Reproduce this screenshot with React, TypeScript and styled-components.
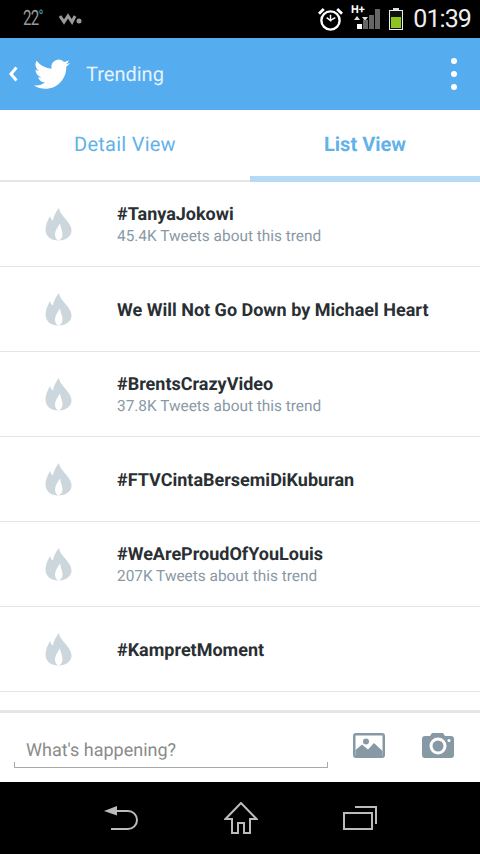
import * as React from "react";
import styled, { createGlobalStyle } from "styled-components";

const GlobalStyle = createGlobalStyle`
  html, body {
    margin: 0;
    padding: 0;
    background: #fff;
  }
  body {
    font-family: Roboto, "Liberation Sans", sans-serif;
    text-rendering: geometricPrecision;
  }
`;

const Screen = styled.div`
  width: 480px;
  height: 854px;
  display: flex;
  flex-direction: column;
  overflow: hidden;
  background: #fff;
`;

const StatusBar = styled.div`
  height: 38px;
  background: #000;
  display: flex;
  align-items: center;
  justify-content: space-between;
  padding: 0 9px 0 23px;
  color: #ddd;
`;

const StatusGroup = styled.div`
  display: flex;
  align-items: center;
`;

const Temp = styled.span`
  font-size: 21px;
  color: #999;
  transform: scaleX(0.72);
  transform-origin: left center;
  width: 22px;
  letter-spacing: -1px;
  white-space: nowrap;
  & sup {
    color: #2a9fc0;
    font-size: 19px;
    line-height: 0;
    vertical-align: 2px;
    letter-spacing: 0;
  }
`;

const WalkmanIcon = styled.svg`
  margin-left: 13px;
`;

const SignalIcon = styled.svg`
  margin-left: 8px;
`;

const BatteryIcon = styled.svg`
  margin-left: 8px;
`;

const Clock = styled.span`
  font-size: 25px;
  color: #eee;
  margin-left: 10px;
  letter-spacing: -0.9px;
`;

const AppBar = styled.div`
  height: 72px;
  background: #55acee;
  display: flex;
  align-items: center;
  padding: 0 23px 0 8px;
  color: #fff;
`;

const BirdIcon = styled.svg`
  margin-left: 15px;
`;

const AppTitle = styled.span`
  font-size: 20px;
  color: #e6f3fd;
  margin-left: 16px;
  flex: 1;
`;

const Kebab = styled.div`
  display: flex;
  flex-direction: column;
  gap: 7px;
`;

const KebabDot = styled.span`
  width: 6px;
  height: 6px;
  border-radius: 50%;
  background: #fff;
`;

const Tabs = styled.div`
  height: 72px;
  box-sizing: border-box;
  display: flex;
  border-bottom: 2px solid #e3e5e6;
`;

const Tab = styled.div<{ $active?: boolean }>`
  width: ${(p) => (p.$active ? "230px" : "250px")};
  position: relative;
  display: flex;
  align-items: center;
  justify-content: center;
  padding-bottom: 2px;
  box-sizing: border-box;
  font-size: 20px;
  color: #62b2ea;
  font-weight: ${(p) => (p.$active ? 700 : 400)};
  letter-spacing: ${(p) => (p.$active ? "0" : "0.25px")};
  &::after {
    content: "";
    display: ${(p) => (p.$active ? "block" : "none")};
    position: absolute;
    left: 0;
    right: 0;
    bottom: -2px;
    height: 6px;
    background: #b5daf5;
  }
`;

const TrendList = styled.div`
  flex: 1;
  min-height: 0;
`;

const TrendRow = styled.div`
  height: 85px;
  box-sizing: border-box;
  display: flex;
  align-items: center;
  border-bottom: 1px solid #e3e5e6;
`;

const FlameCell = styled.div`
  width: 117px;
  padding-left: 45px;
  box-sizing: border-box;
  display: flex;
`;

const TrendText = styled.div`
  display: flex;
  flex-direction: column;
  gap: 2px;
  padding-top: 1px;
`;

const TrendName = styled.div`
  font-size: 18px;
  font-weight: 700;
  color: #292f33;
  line-height: 21px;
  &:only-child {
    padding-top: 2px;
  }
`;

const TrendCount = styled.div`
  font-size: 15.4px;
  color: #8899a6;
  line-height: 18px;
`;

const Composer = styled.div`
  height: 72px;
  box-sizing: border-box;
  border-top: 3px solid #e3e5e6;
  display: flex;
  padding: 0 26px 0 14px;
`;

const InputLine = styled.div`
  width: 314px;
  height: 55px;
  box-sizing: border-box;
  border-bottom: 1px solid #aaa;
  border-left: 1px solid #aaa;
  border-right: 1px solid #aaa;
  position: relative;
  display: flex;
  align-items: flex-end;
  padding: 0 0 3px 11px;
  font-size: 18px;
  color: #8a8a8a;
  line-height: 26px;
  &::before {
    content: "";
    position: absolute;
    left: -1px;
    right: -1px;
    top: 0;
    bottom: 5px;
    background: #fff;
  }
  & span {
    position: relative;
  }
`;

const ComposerIcons = styled.div`
  flex: 1;
  display: flex;
  justify-content: space-between;
  align-items: flex-start;
  padding: 20px 0 0 25px;
`;

const NavBar = styled.div`
  height: 72px;
  background: #000;
  display: flex;
  align-items: center;
  justify-content: space-between;
  padding: 0 103px 0 104px;
`;

const Bird = () => (
  <BirdIcon width="36" height="31" viewBox="0 0 24 20" fill="#fff">
    <path d="M24 2.4a9.8 9.8 0 0 1-2.8.8A5 5 0 0 0 23.3.5a9.800 9.800 0 0 1-3.100 1.200A4.900 4.900 0 0 0 11.800 6.200 13.900 13.900 0 0 1 1.700.9a4.900 4.900 0 0 0 1.500 6.600 4.900 4.900 0 0 1-2.200-.6c0 2.400 1.700 4.400 3.900 4.900a4.900 4.900 0 0 1-2.200.1 4.900 4.900 0 0 0 4.600 3.400A9.900 9.900 0 0 1 0 17.300 13.900 13.900 0 0 0 7.500 19.500c9.100 0 14.300-7.700 14-14.600A10 10 0 0 0 24 2.400z" />
  </BirdIcon>
);

const Flame = () => (
  <svg width="27" height="33" viewBox="0 0 27 33">
    <path
      fill="#ccd6dd"
      fillRule="evenodd"
      d="M14 0c.5 4.500 3.500 7 7 11.500 3 3.800 5.500 7 5.500 11 0 5.500-5 10-13 10S.5 28 .5 21.500c0-4.500 2-9 4.500-13.500.5 2 1.500 3.500 3 4.500C8.500 8 11 3.500 14 0zM15 15.500c-2.500 4-5 7-5 11 0 3 1.500 5.500 3.500 6 2-.5 4-3 4-6 0-4-2-7-2.500-11z"
    />
  </svg>
);

const PhotoIcon = () => (
  <svg width="32" height="25" viewBox="0 0 32 25">
    <rect width="32" height="25" rx="3" fill="#8899a6" />
    <rect x="2.500" y="2.500" width="27" height="20" fill="#fff" />
    <circle cx="13" cy="8.500" r="3" fill="#8899a6" />
    <path fill="#8899a6" d="M2.500 17 9 11.500l6 5 6-6.500 8.500 8v5h-27z" />
  </svg>
);

const CameraIcon = () => (
  <svg width="32" height="25" viewBox="0 0 32 25">
    <path fill="#8899a6" d="M3 3h5l2-3h11l2 3h6a3 3 0 0 1 3 3v16a3 3 0 0 1-3 3H3a3 3 0 0 1-3-3V6a3 3 0 0 1 3-3z" />
    <circle cx="16" cy="13" r="8.500" fill="#fff" />
    <circle cx="16" cy="13" r="5.500" fill="#8899a6" />
    <circle cx="27" cy="7.500" r="1.500" fill="#fff" />
  </svg>
);

const BackIcon = () => (
  <svg width="34" height="26" viewBox="0 0 34 26" fill="none">
    <path d="M0 6l13-5v9.500z" fill="#bbb" />
    <path d="M12 6h12a9 9 0 0 1 0 18H7" stroke="#bbb" strokeWidth="2" />
  </svg>
);

const HomeIcon = () => (
  <svg width="34" height="32" viewBox="0 0 34 32" fill="none">
    <path d="M17 1 1.500 17H8v14h6V21h6v10h6V17h6.500z" stroke="#bbb" strokeWidth="2" />
  </svg>
);

const RecentsIcon = () => (
  <svg width="34" height="24" viewBox="0 0 34 24" fill="none">
    <rect x="1" y="7" width="28" height="16" stroke="#bbb" strokeWidth="2" />
    <path d="M12 1h21v17" stroke="#bbb" strokeWidth="2" />
  </svg>
);

const trends = [
  { name: "#TanyaJokowi", count: "45.4K Tweets about this trend" },
  { name: "We Will Not Go Down by Michael Heart" },
  { name: "#BrentsCrazyVideo", count: "37.8K Tweets about this trend" },
  { name: "#FTVCintaBersemiDiKuburan" },
  { name: "#WeAreProudOfYouLouis", count: "207K Tweets about this trend" },
  { name: "#KampretMoment" },
];

const App = () => (
  <Screen>
    <GlobalStyle />
    <StatusBar>
      <StatusGroup>
        <Temp>
          22<sup>°</sup>
        </Temp>
        <WalkmanIcon width="24" height="12" viewBox="0 0 24 12" fill="none">
          <path d="M2 3l4 6 4-6 4 6 3-6" stroke="#999" strokeWidth="3" />
          <circle cx="21" cy="8" r="2.500" fill="#999" />
        </WalkmanIcon>
      </StatusGroup>
      <StatusGroup>
        <svg width="25" height="25" viewBox="0 0 26 26" fill="none" stroke="#fff">
          <circle cx="13" cy="14" r="9.500" strokeWidth="2.500" />
          <path d="M13 8v6l-4-3M13 14l5-3" strokeWidth="1.500" />
          <path d="M1 7l5-5M25 7l-5-5" strokeWidth="3" />
        </svg>
        <SignalIcon width="30" height="30" viewBox="0 0 30 30">
          <text x="0" y="9" fontSize="11" fontWeight="700" fill="#fff" fontFamily="Roboto, sans-serif">
            H+
          </text>
          <path d="M3 16l3-4 3 4zM11 13h6l-3 4z" fill="#ddd" />
          <rect x="6" y="20" width="5" height="5" fill="#fff" />
          <rect x="12" y="16" width="5" height="9" fill="#666" />
          <rect x="18" y="11" width="5" height="14" fill="#666" />
          <rect x="24" y="5" width="5" height="20" fill="#666" />
        </SignalIcon>
        <BatteryIcon width="14" height="22" viewBox="0 0 14 22">
          <rect x="4" y="0" width="6" height="2" fill="#ddd" />
          <rect x="0.500" y="2.500" width="13" height="19" fill="#111" stroke="#eee" />
          <rect x="2" y="9" width="10" height="11" fill="#8fc31f" />
        </BatteryIcon>
        <Clock>01:39</Clock>
      </StatusGroup>
    </StatusBar>
    <AppBar>
      <svg width="11" height="16" viewBox="0 0 11 16" fill="none">
        <path d="M8.500 1.500 3 8l5.500 6.500" stroke="#fff" strokeWidth="3" />
      </svg>
      <Bird />
      <AppTitle>Trending</AppTitle>
      <Kebab>
        <KebabDot />
        <KebabDot />
        <KebabDot />
      </Kebab>
    </AppBar>
    <Tabs>
      <Tab>Detail View</Tab>
      <Tab $active>List View</Tab>
    </Tabs>
    <TrendList>
      {trends.map((t) => (
        <TrendRow key={t.name}>
          <FlameCell>
            <Flame />
          </FlameCell>
          <TrendText>
            <TrendName>{t.name}</TrendName>
            {t.count && <TrendCount>{t.count}</TrendCount>}
          </TrendText>
        </TrendRow>
      ))}
    </TrendList>
    <Composer>
      <InputLine>
        <span>What's happening?</span>
      </InputLine>
      <ComposerIcons>
        <PhotoIcon />
        <CameraIcon />
      </ComposerIcons>
    </Composer>
    <NavBar>
      <BackIcon />
      <HomeIcon />
      <RecentsIcon />
    </NavBar>
  </Screen>
);

export default App;
